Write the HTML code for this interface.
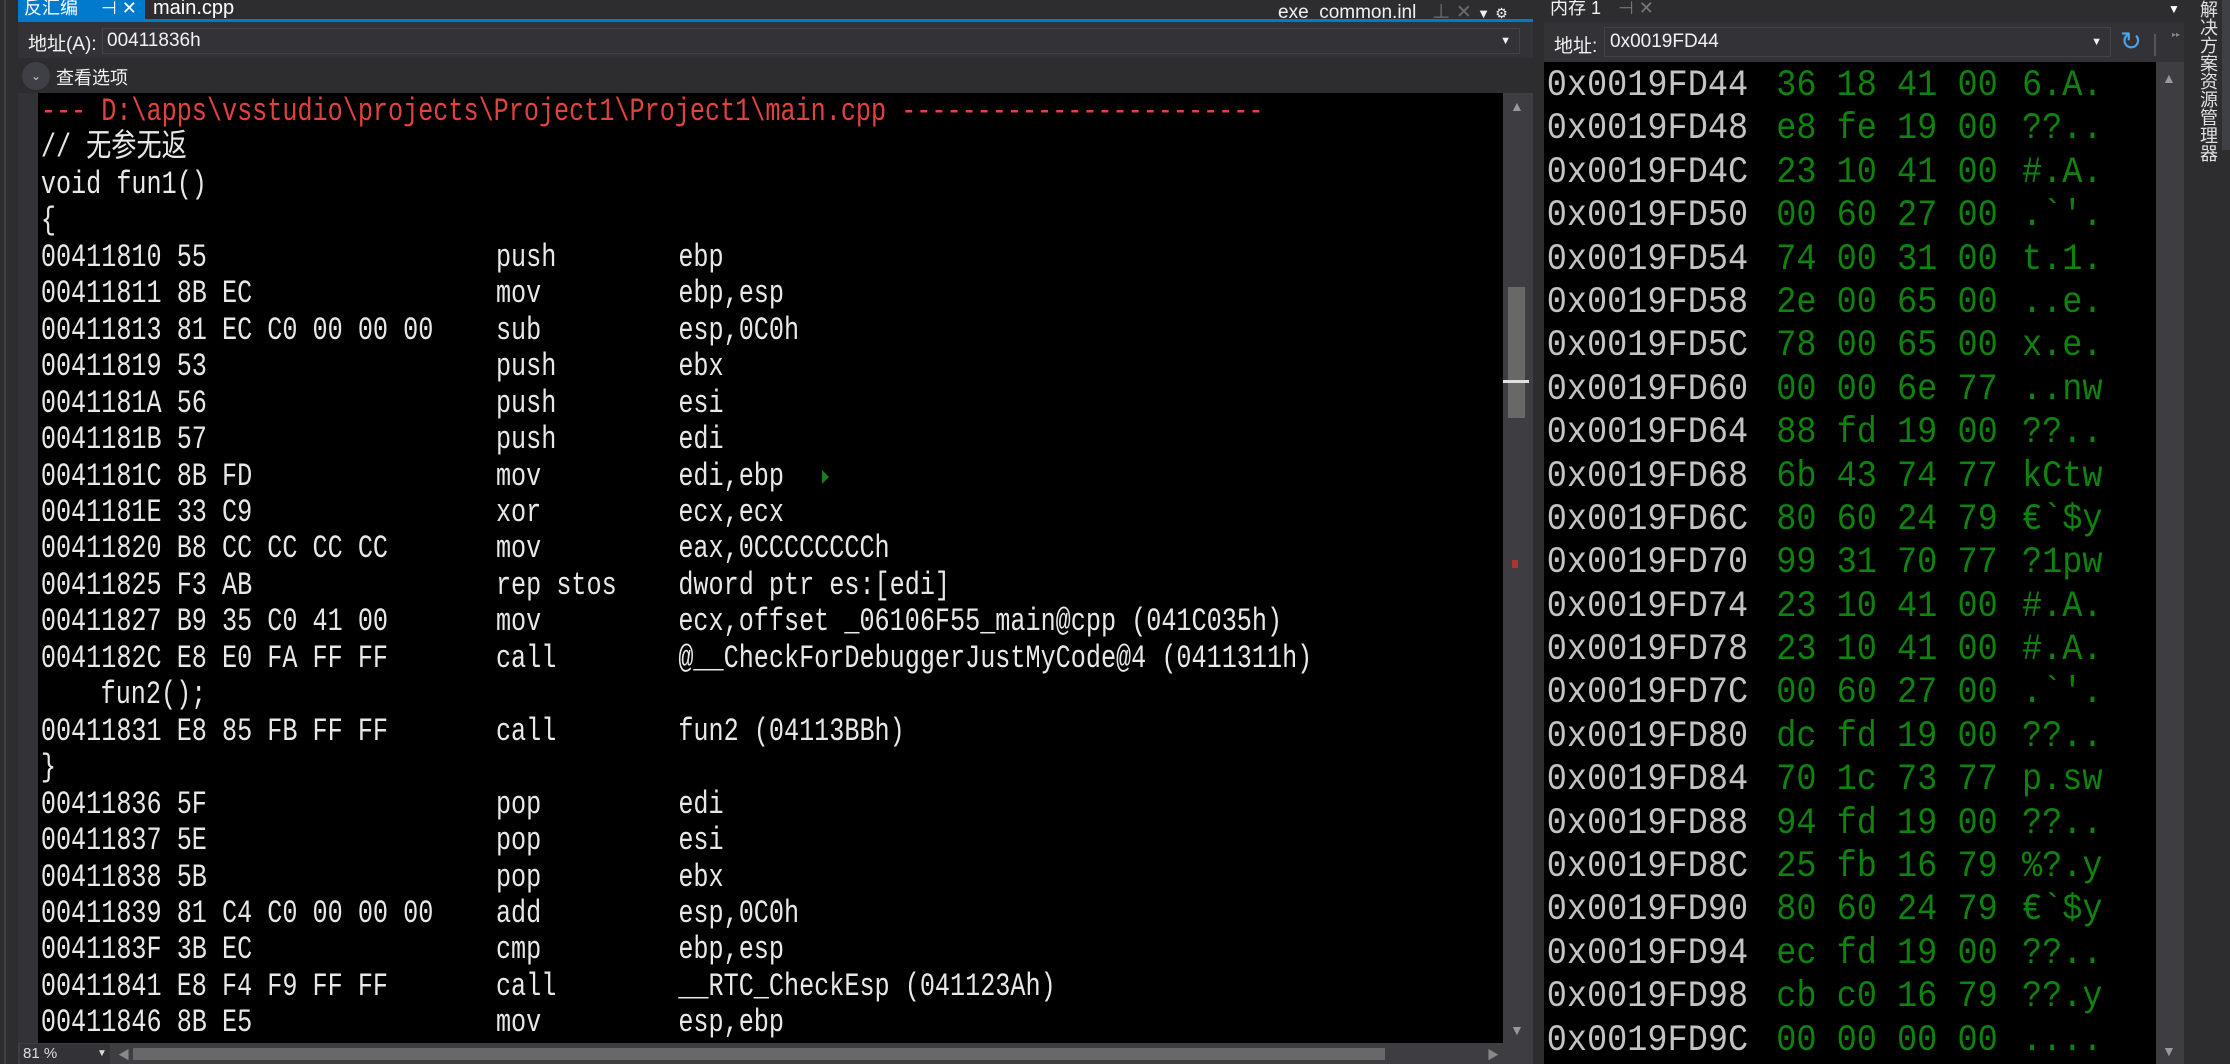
<!DOCTYPE html>
<html><head><meta charset="utf-8"><style>
*{margin:0;padding:0;box-sizing:border-box}
html,body{width:2230px;height:1064px;overflow:hidden}
body{background:#2d2d30;position:relative;font-family:"Liberation Sans","Noto Sans CJK SC",sans-serif;color:#f1f1f1}
.a{position:absolute}
.code{position:absolute;left:0;top:94px;width:1900px;transform:scaleX(0.786);transform-origin:0 0;font-family:"Liberation Mono","Noto Sans CJK SC",monospace;font-size:32px;color:#e8e8e8}
.code div{position:relative;height:36.46px;line-height:36.46px}
.code span{position:absolute;top:0;white-space:pre}
.mem{position:absolute;left:1544px;top:65px;width:700px;transform:scaleX(0.907);transform-origin:0 0;font-family:"Liberation Mono",monospace;font-size:37px}
.mem div{position:relative;height:43.4px;line-height:43.4px}
.mem span{position:absolute;top:0;white-space:pre}
.ad{color:#c4c4c4}.g{color:#0f820f}
</style></head><body>
<div class="a" style="left:0;top:0;width:18px;height:1064px;background:#2d2d30"></div>
<div class="a" style="left:4px;top:0;width:2px;height:1064px;background:#3f3f46"></div>
<div class="a" style="left:18px;top:0;width:1515px;height:19px;background:#2d2d30"></div>
<div class="a" style="left:18px;top:0;width:127px;height:19px;background:#007acc;font-size:18px;line-height:16px;padding-left:6px;color:#fff;white-space:nowrap">反汇编 <span style="margin-left:18px">⊣ ✕</span></div>
<div class="a" style="left:153px;top:-3px;font-size:20px;color:#fff">main.cpp</div>
<div class="a" style="left:1278px;top:-3px;font-size:19px;color:#f1f1f1;white-space:nowrap">exe_common.inl <span style="color:#6a6a6a;margin-left:10px">⊥ ✕</span> <span style="font-size:13px">▼</span> <span style="font-size:14px">⚙</span></div>
<div class="a" style="left:18px;top:19px;width:1515px;height:3px;background:#007acc"></div>
<div class="a" style="left:18px;top:22px;width:1515px;height:36px;background:#333337"></div>
<div class="a" style="left:28px;top:29px;font-size:19px;color:#f1f1f1">地址(A):</div>
<div class="a" style="left:102px;top:28px;width:1418px;height:26px;background:#333337;border:1px solid #434346;font-size:19px;line-height:24px;padding-left:4px">00411836h<span style="position:absolute;right:8px;font-size:11px">▼</span></div>
<div class="a" style="left:18px;top:58px;width:1515px;height:35px;background:#2d2d30"></div>
<div class="a" style="left:22px;top:62px;width:28px;height:28px;border-radius:50%;background:#3f3f46;color:#ccc;font-size:12px;text-align:center;line-height:28px">⌄</div>
<div class="a" style="left:56px;top:64px;font-size:18px">查看选项</div>
<div class="a" style="left:18px;top:93px;width:20px;height:950px;background:#333337"></div>
<div class="a" style="left:38px;top:93px;width:1465px;height:950px;background:#000"></div>
<div class="a" style="left:1503px;top:93px;width:30px;height:950px;background:#3e3e42"></div>
<div class="a" style="left:1508px;top:287px;width:17px;height:131px;background:#686868"></div>
<div class="a" style="left:1503px;top:380px;width:26px;height:3px;background:#e0e0e0"></div>
<div class="a" style="left:1512px;top:560px;width:6px;height:8px;background:#a33"></div>
<div class="a" style="left:1510px;top:98px;font-size:14px;color:#999">▲</div>
<div class="a" style="left:1510px;top:1022px;font-size:14px;color:#999">▼</div>
<div class="a" style="left:822px;top:470px;width:0;height:0;border-top:7px solid transparent;border-bottom:7px solid transparent;border-left:7px solid #1f7a1f"></div>
<div class="code">
<div style="color:#e0423e"><span style="left:52px">--- D:\apps\vsstudio\projects\Project1\Project1\main.cpp ------------------------</span></div>
<div><span style="left:52px">// 无参无返</span></div>
<div><span style="left:52px">void fun1()</span></div>
<div><span style="left:52px">{</span></div>
<div><span style="left:52px">00411810 55</span><span style="left:631px">push</span><span style="left:863px">ebp</span></div>
<div><span style="left:52px">00411811 8B EC</span><span style="left:631px">mov</span><span style="left:863px">ebp,esp</span></div>
<div><span style="left:52px">00411813 81 EC C0 00 00 00</span><span style="left:631px">sub</span><span style="left:863px">esp,0C0h</span></div>
<div><span style="left:52px">00411819 53</span><span style="left:631px">push</span><span style="left:863px">ebx</span></div>
<div><span style="left:52px">0041181A 56</span><span style="left:631px">push</span><span style="left:863px">esi</span></div>
<div><span style="left:52px">0041181B 57</span><span style="left:631px">push</span><span style="left:863px">edi</span></div>
<div><span style="left:52px">0041181C 8B FD</span><span style="left:631px">mov</span><span style="left:863px">edi,ebp</span></div>
<div><span style="left:52px">0041181E 33 C9</span><span style="left:631px">xor</span><span style="left:863px">ecx,ecx</span></div>
<div><span style="left:52px">00411820 B8 CC CC CC CC</span><span style="left:631px">mov</span><span style="left:863px">eax,0CCCCCCCCh</span></div>
<div><span style="left:52px">00411825 F3 AB</span><span style="left:631px">rep stos</span><span style="left:863px">dword ptr es:[edi]</span></div>
<div><span style="left:52px">00411827 B9 35 C0 41 00</span><span style="left:631px">mov</span><span style="left:863px">ecx,offset _06106F55_main@cpp (041C035h)</span></div>
<div><span style="left:52px">0041182C E8 E0 FA FF FF</span><span style="left:631px">call</span><span style="left:863px">@__CheckForDebuggerJustMyCode@4 (0411311h)</span></div>
<div><span style="left:128px">fun2();</span></div>
<div><span style="left:52px">00411831 E8 85 FB FF FF</span><span style="left:631px">call</span><span style="left:863px">fun2 (04113BBh)</span></div>
<div><span style="left:52px">}</span></div>
<div><span style="left:52px">00411836 5F</span><span style="left:631px">pop</span><span style="left:863px">edi</span></div>
<div><span style="left:52px">00411837 5E</span><span style="left:631px">pop</span><span style="left:863px">esi</span></div>
<div><span style="left:52px">00411838 5B</span><span style="left:631px">pop</span><span style="left:863px">ebx</span></div>
<div><span style="left:52px">00411839 81 C4 C0 00 00 00</span><span style="left:631px">add</span><span style="left:863px">esp,0C0h</span></div>
<div><span style="left:52px">0041183F 3B EC</span><span style="left:631px">cmp</span><span style="left:863px">ebp,esp</span></div>
<div><span style="left:52px">00411841 E8 F4 F9 FF FF</span><span style="left:631px">call</span><span style="left:863px">__RTC_CheckEsp (041123Ah)</span></div>
<div><span style="left:52px">00411846 8B E5</span><span style="left:631px">mov</span><span style="left:863px">esp,ebp</span></div>
</div>
<div class="a" style="left:18px;top:1043px;width:1515px;height:21px;background:#3e3e42"></div>
<div class="a" style="left:20px;top:1044px;width:90px;height:20px;background:#333337;font-size:15px;color:#ddd;padding-left:3px;line-height:20px">81 %<span style="position:absolute;left:77px;font-size:10px">▼</span></div>
<div class="a" style="left:118px;top:1046px;font-size:12px;color:#888">◀</div>
<div class="a" style="left:133px;top:1048px;width:1252px;height:12px;background:#686868"></div>
<div class="a" style="left:1487px;top:1046px;font-size:12px;color:#888">▶</div>
<div class="a" style="left:1533px;top:0;width:11px;height:1064px;background:#2d2d30"></div>
<div class="a" style="left:1544px;top:0;width:124px;height:19px;background:#2d2d30;font-size:18px;line-height:16px;padding-left:6px;color:#f1f1f1;white-space:nowrap">内存 1 <span style="color:#777;margin-left:12px">⊣ ✕</span></div>
<div class="a" style="left:2168px;top:2px;font-size:12px;color:#fff">▼</div>
<div class="a" style="left:1544px;top:22px;width:640px;height:40px;background:#333337"></div>
<div class="a" style="left:1554px;top:31px;font-size:19px">地址:</div>
<div class="a" style="left:1604px;top:27px;width:507px;height:30px;border:1px solid #434346;font-size:19px;line-height:28px;padding-left:5px">0x0019FD44<span style="position:absolute;right:8px;font-size:11px">▼</span></div>
<div class="a" style="left:2120px;top:26px;font-size:26px;color:#4aa3f0">↻</div>
<div class="a" style="left:2154px;top:34px;width:2px;height:22px;background:#555"></div>
<div class="a" style="left:2172px;top:30px;font-size:8px;color:#888">▸▸</div>
<div class="a" style="left:1544px;top:62px;width:612px;height:1002px;background:#000"></div>
<div class="a" style="left:2156px;top:62px;width:28px;height:1002px;background:#3e3e42"></div>
<div class="a" style="left:2162px;top:70px;font-size:14px;color:#999">▲</div>
<div class="a" style="left:2162px;top:1043px;font-size:14px;color:#999">▼</div>
<div class="mem">
<div><span class="ad" style="left:3px">0x0019FD44</span><span class="g" style="left:256px">36 18 41 00</span><span class="g" style="left:527px">6.A.</span></div>
<div><span class="ad" style="left:3px">0x0019FD48</span><span class="g" style="left:256px">e8 fe 19 00</span><span class="g" style="left:527px">??..</span></div>
<div><span class="ad" style="left:3px">0x0019FD4C</span><span class="g" style="left:256px">23 10 41 00</span><span class="g" style="left:527px">#.A.</span></div>
<div><span class="ad" style="left:3px">0x0019FD50</span><span class="g" style="left:256px">00 60 27 00</span><span class="g" style="left:527px">.`'.</span></div>
<div><span class="ad" style="left:3px">0x0019FD54</span><span class="g" style="left:256px">74 00 31 00</span><span class="g" style="left:527px">t.1.</span></div>
<div><span class="ad" style="left:3px">0x0019FD58</span><span class="g" style="left:256px">2e 00 65 00</span><span class="g" style="left:527px">..e.</span></div>
<div><span class="ad" style="left:3px">0x0019FD5C</span><span class="g" style="left:256px">78 00 65 00</span><span class="g" style="left:527px">x.e.</span></div>
<div><span class="ad" style="left:3px">0x0019FD60</span><span class="g" style="left:256px">00 00 6e 77</span><span class="g" style="left:527px">..nw</span></div>
<div><span class="ad" style="left:3px">0x0019FD64</span><span class="g" style="left:256px">88 fd 19 00</span><span class="g" style="left:527px">??..</span></div>
<div><span class="ad" style="left:3px">0x0019FD68</span><span class="g" style="left:256px">6b 43 74 77</span><span class="g" style="left:527px">kCtw</span></div>
<div><span class="ad" style="left:3px">0x0019FD6C</span><span class="g" style="left:256px">80 60 24 79</span><span class="g" style="left:527px">€`$y</span></div>
<div><span class="ad" style="left:3px">0x0019FD70</span><span class="g" style="left:256px">99 31 70 77</span><span class="g" style="left:527px">?1pw</span></div>
<div><span class="ad" style="left:3px">0x0019FD74</span><span class="g" style="left:256px">23 10 41 00</span><span class="g" style="left:527px">#.A.</span></div>
<div><span class="ad" style="left:3px">0x0019FD78</span><span class="g" style="left:256px">23 10 41 00</span><span class="g" style="left:527px">#.A.</span></div>
<div><span class="ad" style="left:3px">0x0019FD7C</span><span class="g" style="left:256px">00 60 27 00</span><span class="g" style="left:527px">.`'.</span></div>
<div><span class="ad" style="left:3px">0x0019FD80</span><span class="g" style="left:256px">dc fd 19 00</span><span class="g" style="left:527px">??..</span></div>
<div><span class="ad" style="left:3px">0x0019FD84</span><span class="g" style="left:256px">70 1c 73 77</span><span class="g" style="left:527px">p.sw</span></div>
<div><span class="ad" style="left:3px">0x0019FD88</span><span class="g" style="left:256px">94 fd 19 00</span><span class="g" style="left:527px">??..</span></div>
<div><span class="ad" style="left:3px">0x0019FD8C</span><span class="g" style="left:256px">25 fb 16 79</span><span class="g" style="left:527px">%?.y</span></div>
<div><span class="ad" style="left:3px">0x0019FD90</span><span class="g" style="left:256px">80 60 24 79</span><span class="g" style="left:527px">€`$y</span></div>
<div><span class="ad" style="left:3px">0x0019FD94</span><span class="g" style="left:256px">ec fd 19 00</span><span class="g" style="left:527px">??..</span></div>
<div><span class="ad" style="left:3px">0x0019FD98</span><span class="g" style="left:256px">cb c0 16 79</span><span class="g" style="left:527px">??.y</span></div>
<div><span class="ad" style="left:3px">0x0019FD9C</span><span class="g" style="left:256px">00 00 00 00</span><span class="g" style="left:527px">....</span></div>
</div>
<div class="a" style="left:2184px;top:0;width:46px;height:1064px;background:#2d2d30"></div>
<div class="a" style="left:2222px;top:0;width:8px;height:150px;background:#3f3f46"></div>
<div class="a" style="left:2194px;top:0;width:22px;font-size:18px;line-height:17px;color:#e0e0e0;writing-mode:vertical-rl">解决方案资源管理器</div>
</body></html>
